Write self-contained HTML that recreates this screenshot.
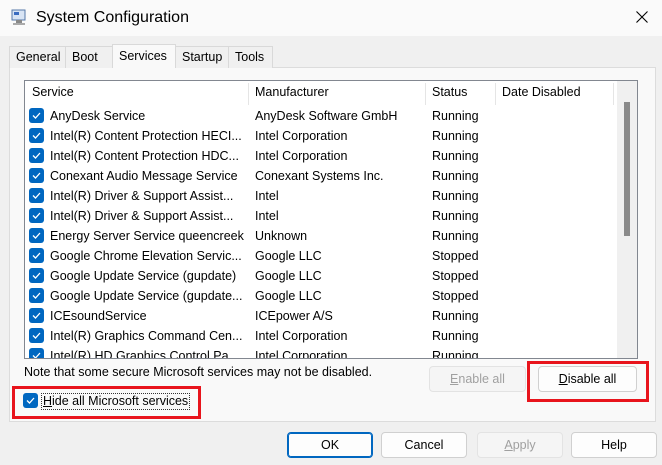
<!DOCTYPE html>
<html><head><style>
*{margin:0;padding:0;box-sizing:border-box}
body{width:662px;height:465px;overflow:hidden;background:#f0f0f0;font-family:"Liberation Sans",sans-serif;font-size:12.5px;color:#000;position:relative}
.a{position:absolute}
.title{left:0;top:0;width:662px;height:36px;background:#fafafa}
.tab{position:absolute;top:46px;height:22px;border:1px solid #d9d9d9;border-bottom:none;background:#f0f0f0;padding:3px 0 0 6px;font-size:12.5px}
.panel{left:9px;top:67px;width:647px;height:355px;background:#f9f9f9;border:1px solid #dcdcdc}
.list{left:24px;top:80px;width:614px;height:279px;background:#fff;border:1px solid #828790;overflow:hidden}
.hdr{position:absolute;top:4px;height:20px}
.div{position:absolute;top:2px;width:1px;height:22px;background:#e5e5e5}
.row{position:absolute;left:0;height:20px;width:600px}
.row span{position:absolute;top:3px;white-space:nowrap}
.cb{position:absolute;width:15px;height:15px;background:#0067c0;border-radius:3px}
.cb svg{position:absolute;left:2px;top:2px}
.btn{position:absolute;height:26px;border:1px solid #d0d0d0;border-radius:4px;background:#fdfdfd;text-align:center;line-height:24px;font-size:12.5px}
.dis{color:#a0a0a0;background:#f5f5f5;border-color:#e3e3e3}
.red{position:absolute;border:3px solid #e8141c}
</style></head><body>
<div class="a title"></div>
<svg class="a" style="left:10px;top:8px" width="18" height="18" viewBox="0 0 18 18"><rect x="2" y="2" width="13" height="10" fill="#d8e4f4" stroke="#5578a8"/><rect x="4" y="4" width="5" height="3" fill="#3a6cc0"/><rect x="6" y="12" width="6" height="3" fill="#888"/><rect x="3" y="15" width="12" height="2" fill="#aaa"/></svg>
<div class="a" style="left:36px;top:9px;font-size:16px">System Configuration</div>
<svg class="a" style="left:636px;top:11px" width="12" height="12" viewBox="0 0 12 12"><path d="M0.5 0.5L11.5 11.5M11.5 0.5L0.5 11.5" stroke="#000" stroke-width="1.1"/></svg>
<div class="a panel"></div>
<div class="tab" style="left:9px;width:57px">General</div>
<div class="tab" style="left:65px;width:48px">Boot</div>
<div class="tab" style="left:112px;top:44px;height:24px;width:64px;background:#f9f9f9;padding-top:4px;z-index:2">Services</div>
<div class="tab" style="left:175px;width:54px">Startup</div>
<div class="tab" style="left:228px;width:45px">Tools</div>
<div class="a list">
 <div class="hdr" style="left:7px">Service</div>
 <div class="div" style="left:223px"></div>
 <div class="hdr" style="left:230px">Manufacturer</div>
 <div class="div" style="left:400px"></div>
 <div class="hdr" style="left:407px">Status</div>
 <div class="div" style="left:470px"></div>
 <div class="hdr" style="left:477px">Date Disabled</div>
 <div class="div" style="left:588px"></div>
 <div class="a" style="left:592px;top:0;width:21px;height:279px;background:#f0f0f0"></div>
 <div class="a" style="left:599px;top:21px;width:6px;height:134px;background:#8a8a8a"></div>
 <div id="rows"></div>
</div>
<div class="a" style="left:24px;top:365px">Note that some secure Microsoft services may not be disabled.</div>
<div class="btn dis" style="left:429px;top:366px;width:97px"><u>E</u>nable all</div>
<div class="btn" style="left:538px;top:366px;width:99px"><u>D</u>isable all</div>
<div class="red" style="left:527px;top:361px;width:122px;height:41px"></div>
<div class="cb" style="left:23px;top:393px"><svg width="11" height="11" viewBox="0 0 11 11"><path d="M2 5.5 L4.5 8 L9 3" stroke="#fff" stroke-width="1.3" fill="none"/></svg></div>
<div class="a" style="left:41px;top:393px;border:1px dotted #333;padding:0 1px;line-height:15px"><u>H</u>ide all Microsoft services</div>
<div class="red" style="left:12px;top:386px;width:189px;height:33px"></div>
<div class="btn" style="left:287px;top:432px;width:86px;border:1px solid #0067c0;box-shadow:inset 0 0 0 1px #0067c0">OK</div>
<div class="btn" style="left:381px;top:432px;width:86px">Cancel</div>
<div class="btn dis" style="left:477px;top:432px;width:86px"><u>A</u>pply</div>
<div class="btn" style="left:571px;top:432px;width:86px">Help</div>
<script>
var d=[["AnyDesk Service","AnyDesk Software GmbH","Running"],["Intel(R) Content Protection HECI...","Intel Corporation","Running"],["Intel(R) Content Protection HDC...","Intel Corporation","Running"],["Conexant Audio Message Service","Conexant Systems Inc.","Running"],["Intel(R) Driver &amp; Support Assist...","Intel","Running"],["Intel(R) Driver &amp; Support Assist...","Intel","Running"],["Energy Server Service queencreek","Unknown","Running"],["Google Chrome Elevation Servic...","Google LLC","Stopped"],["Google Update Service (gupdate)","Google LLC","Stopped"],["Google Update Service (gupdate...","Google LLC","Stopped"],["ICEsoundService","ICEpower A/S","Running"],["Intel(R) Graphics Command Cen...","Intel Corporation","Running"],["Intel(R) HD Graphics Control Pa...","Intel Corporation","Running"]];
var h="";d.forEach(function(r,i){h+='<div class="row" style="top:'+(25+i*20)+'px"><div class="cb" style="left:4px;top:2px"><svg width="11" height="11" viewBox="0 0 11 11"><path d="M2 5.5 L4.5 8 L9 3" stroke="#fff" stroke-width="1.3" fill="none"/></svg></div><span style="left:25px">'+r[0]+'</span><span style="left:230px">'+r[1]+'</span><span style="left:407px">'+r[2]+'</span></div>';});
document.getElementById("rows").innerHTML=h;
</script>
</body></html>
